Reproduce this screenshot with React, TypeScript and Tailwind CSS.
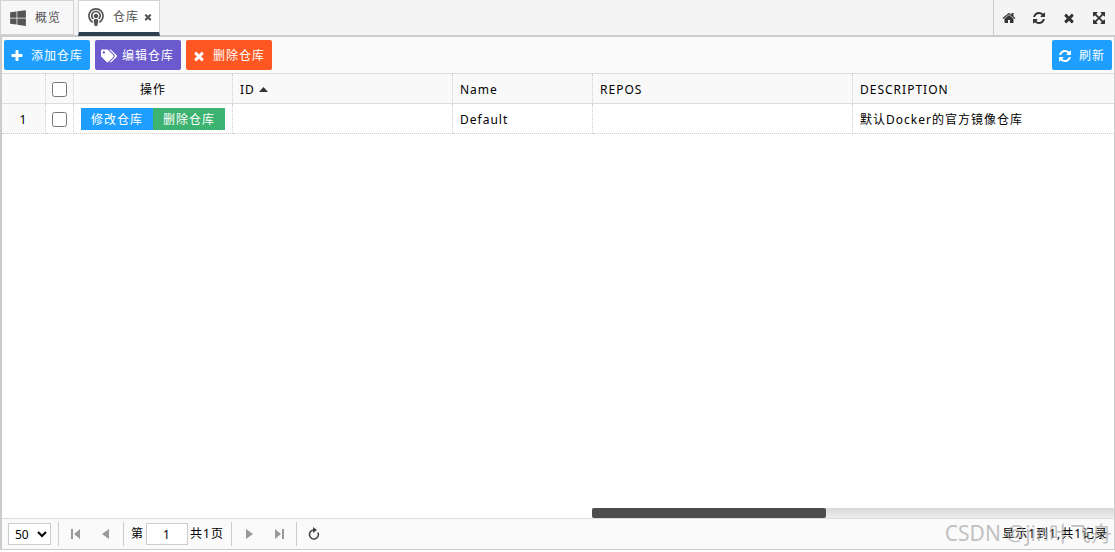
import React from 'react';
import { FaPodcast, FaTags, FaWindows } from 'react-icons/fa';

type IconProps = { className?: string };

const Glyph: React.FC<IconProps & { d: string }> = ({ d, className }) => (
  <svg viewBox="0 0 1792 1792" fill="currentColor" aria-hidden="true" className={className}>
    <path d={d} />
  </svg>
);

const PLUS =
  'M1600 736v192q0 40-28 68t-68 28h-416v416q0 40-28 68t-68 28h-192q-40 0-68-28t-28-68v-416h-416q-40 0-68-28t-28-68v-192q0-40 28-68t68-28h416v-416q0-40 28-68t68-28h192q40 0 68 28t28 68v416h416q40 0 68 28t28 68z';
const TIMES =
  'M1490 1322q0 40-28 68l-136 136q-28 28-68 28t-68-28l-294-294-294 294q-28 28-68 28t-68-28l-136-136q-28-28-28-68t28-68l294-294-294-294q-28-28-28-68t28-68l136-136q28-28 68-28t68 28l294 294 294-294q28-28 68-28t68 28l136 136q28 28 28 68t-28 68l-294 294 294 294q28 28 28 68z';
const REFRESH =
  'M1639 1056q0 5-1 7-64 268-268 434.5t-478 166.5q-146 0-282.5-55t-243.5-157l-129 129q-19 19-45 19t-45-19-19-45v-448q0-26 19-45t45-19h448q26 0 45 19t19 45-19 45l-137 137q71 66 161 102t187 36q134 0 250-65t186-179q11-17 53-117 8-23 30-23h192q13 0 22.5 9.5t9.5 22.5zm25-800v448q0 26-19 45t-45 19h-448q-26 0-45-19t-19-45 19-45l138-138q-148-137-349-137-134 0-250 65t-186 179q-11 17-53 117-8 23-30 23h-199q-13 0-22.5-9.5t-9.5-22.5v-7q65-268 270-434.5t480-166.5q146 0 284 55.5t245 156.5l130-129q19-19 45-19t45 19 19 45z';
const HOME =
  'M1472 992v480q0 26-19 45t-45 19h-384v-384h-256v384h-384q-26 0-45-19t-19-45v-480q0-1 .5-3t.5-3l575-474 575 474q1 2 1 6zm223-69l-62 74q-8 9-21 11h-3q-13 0-21-7l-692-577-692 577q-12 8-24 7-13-2-21-11l-62-74q-8-10-7-23.5t11-21.5l719-599q32-26 76-26t76 26l244 204v-195q0-14 9-23t23-9h192q14 0 23 9t9 23v408l219 182q10 8 11 21.5t-7 23.5z';
const EXPAND =
  'M1411 541l-355 355 355 355 144-144q29-31 70-14 39 17 39 59v448q0 26-19 45t-45 19h-448q-42 0-59-40-17-39 14-69l144-144-355-355-355 355 144 144q31 30 14 69-17 40-59 40h-448q-26 0-45-19t-19-45v-448q0-42 40-59 39-17 69 14l144 144 355-355-355-355-144 144q-19 19-45 19-12 0-24-5-40-17-40-59v-448q0-26 19-45t45-19h448q42 0 59 40 17 39-14 69l-144 144 355 355 355-355-144-144q-31-30-14-69 17-40 59-40h448q26 0 45 19t19 45v448q0 42-39 59-13 5-25 5-26 0-45-19z';

const tools = [
  { label: '首页', d: HOME },
  { label: '刷新页面', d: REFRESH },
  { label: '关闭', d: TIMES },
  { label: '全屏', d: EXPAND },
];

const actions = [
  { label: '添加仓库', color: 'bg-[#1e9fff]', icon: <Glyph d={PLUS} className="size-3.5" /> },
  { label: '编辑仓库', color: 'bg-[#6a5acd]', icon: <FaTags className="size-4" /> },
  { label: '删除仓库', color: 'bg-[#ff5722]', icon: <Glyph d={TIMES} className="size-3.5" /> },
];

const Separator = () => <span className="mx-0.5 h-6 w-px bg-[#ccc]" />;

const PagerButton: React.FC<{ label: string; children: React.ReactNode }> = ({ label, children }) => (
  <button type="button" aria-label={label} className="flex size-[30px] items-center justify-center text-[#999]">
    <svg viewBox="0 0 16 16" fill="currentColor" className="size-4">
      {children}
    </svg>
  </button>
);

// Barra de pestañas
const TabBar = () => (
  <header className="flex h-9 justify-between border-b border-[#ccc] bg-[#f4f4f4] text-[#555]">
    <nav className="flex gap-1">
      <button type="button" className="flex h-[35px] w-[74px] items-center gap-2 border border-[#d3d3d3] bg-[#f7f7f7] pl-2">
        <FaWindows className="size-[18px]" />
        概览
      </button>
      <div className="flex h-9 w-[82px] items-center border border-b-4 border-[#d3d3d3] border-b-[#2f4050] bg-white pt-px pl-2">
        <button type="button" className="flex items-center gap-2">
          <FaPodcast className="size-[18px]" />
          仓库
        </button>
        <button type="button" aria-label="关闭仓库" className="ml-1">
          <Glyph d={TIMES} className="size-2.5" />
        </button>
      </div>
    </nav>
    <div className="flex items-center border-l border-[#ccc] pr-px text-[#333]">
      {tools.map((tool) => (
        <button key={tool.label} type="button" aria-label={tool.label} className="flex h-full w-[30px] items-center justify-center">
          <Glyph d={tool.d} className="size-3.5" />
        </button>
      ))}
    </div>
  </header>
);

const Toolbar = () => (
  <div className="flex justify-between border-b border-[#ddd] bg-[#fafafa] px-0.5 py-[3px] text-white">
    <div className="flex gap-[5px]">
      {actions.map((action) => (
        <button
          key={action.label}
          type="button"
          className={`flex h-[30px] w-[86px] items-center justify-between rounded-xs pt-0.5 pr-[7px] pl-1.5 ${action.color}`}
        >
          {action.icon}
          {action.label}
        </button>
      ))}
    </div>
    <button type="button" className="flex h-[30px] w-[60px] items-center justify-between rounded-xs bg-[#1e9fff] pt-0.5 pr-[7px] pl-1.5">
      <Glyph d={REFRESH} className="size-3.5" />
      刷新
    </button>
  </div>
);

const cell = 'border-r border-b border-dotted border-[#ccc] px-[7px] pt-0.5';
const head = 'border-r border-r-[#ccc] border-b border-b-[#ddd] [border-right-style:dotted] px-[7px] pt-0.5 font-normal';

const RepoTable = () => (
  <table className="w-full table-fixed border-separate border-spacing-0 text-left text-black">
    <colgroup>
      <col className="w-11" />
      <col className="w-7" />
      <col className="w-[159px]" />
      <col className="w-[220px]" />
      <col className="w-[140px]" />
      <col className="w-[260px]" />
      <col />
    </colgroup>
    <thead>
      <tr className="h-[30px] bg-[#f9f9f9]">
        <th className={head} />
        <th className="border-r border-b border-r-[#ccc] border-b-[#ddd] pt-0.5 [border-right-style:dotted]">
          <input type="checkbox" aria-label="全选" className="mx-auto block size-[15px]" />
        </th>
        <th className={`${head} text-center`}>操作</th>
        <th className={head}>
          <span className="flex items-center gap-1">
            ID
            <svg viewBox="0 0 8 4" fill="currentColor" preserveAspectRatio="none" className="h-[5px] w-[9px] text-[#333]">
              <path d="M0 4L4 0L8 4z" />
            </svg>
          </span>
        </th>
        <th className={head}>Name</th>
        <th className={head}>REPOS</th>
        <th className="border-b border-[#ddd] px-[7px] pt-0.5 font-normal">DESCRIPTION</th>
      </tr>
    </thead>
    <tbody>
      <tr className="h-[30px]">
        <td className={`${cell} bg-[#f9f9f9] text-center`}>1</td>
        <td className="border-r border-b border-dotted border-[#ccc] pt-0.5">
          <input type="checkbox" aria-label="选择 Default" className="mx-auto block size-[15px]" />
        </td>
        <td className="border-r border-b border-dotted border-[#ccc] px-[7px]">
          <div className="flex text-white">
            <button type="button" className="h-[22px] flex-1 bg-[#1e9fff] pt-0.5">修改仓库</button>
            <button type="button" className="h-[22px] flex-1 bg-[#3cb371] pt-0.5">删除仓库</button>
          </div>
        </td>
        <td className={cell} />
        <td className={cell}>Default</td>
        <td className={cell} />
        <td className="border-b border-dotted border-[#ccc] px-[7px] pt-0.5">默认Docker的官方镜像仓库</td>
      </tr>
    </tbody>
  </table>
);

const Pager = () => (
  <footer className="relative flex h-[31px] items-center justify-between border-t border-[#ddd] bg-[#fafafa] px-1.5 text-black">
    <div className="flex items-center">
      <select aria-label="每页条数" defaultValue="50" className="mr-[5px] h-[22px] w-[43px] border border-[#ccc] bg-white pl-0.5 tracking-normal">
        <option>50</option>
      </select>
      <Separator />
      <PagerButton label="第一页">
        <path d="M3 3h2v10H3zM12 3v10L6 8z" />
      </PagerButton>
      <PagerButton label="上一页">
        <path d="M11 3v10L4 8z" />
      </PagerButton>
      <Separator />
      <label className="mx-[5px] flex items-center gap-0.5">
        第
        <input type="text" defaultValue="1" className="h-[22px] w-[42px] border border-[#ccc] bg-white text-center" />
        共1页
      </label>
      <Separator />
      <PagerButton label="下一页">
        <path d="M5 3v10l7-5z" />
      </PagerButton>
      <PagerButton label="最后一页">
        <path d="M4 3v10l6-5zM11 3h2v10h-2z" />
      </PagerButton>
      <Separator />
      <button type="button" aria-label="重新加载" className="flex size-[30px] items-center justify-center text-[#444]">
        <svg viewBox="0 0 16 16" fill="none" className="size-4">
          <path d="M8 4a4.500 4.500 0 1 0 4 2.500" stroke="currentColor" strokeWidth="1.600" />
          <path d="M7 1l4 3-4 3z" fill="currentColor" />
        </svg>
      </button>
    </div>
    <span>显示1到1,共1记录</span>
    <span className="pointer-events-none absolute right-0.5 bottom-0.5 text-[21px] leading-7 tracking-normal whitespace-nowrap text-[#999]/60">
      CSDN @jin叶飞舟
    </span>
  </footer>
);

export default function App() {
  return (
    <div className="flex h-screen flex-col bg-white pb-0.5 font-['Noto_Sans','Noto_Sans_CJK_SC',sans-serif] text-[12px] leading-4 tracking-[1px]">
      <TabBar />
      <main className="flex flex-1 flex-col border border-l-2 border-[#ccc]">
        <Toolbar />
        <div className="flex flex-1 flex-col justify-between">
          <RepoTable />
          <div className="flex h-2.5 bg-gradient-to-b from-[#d8d8d8] to-[#eee]">
            <div className="w-[53.1%] bg-white" />
            <div className="w-[21%] rounded-xs bg-[#4d4d4d]" />
          </div>
        </div>
        <Pager />
      </main>
    </div>
  );
}
